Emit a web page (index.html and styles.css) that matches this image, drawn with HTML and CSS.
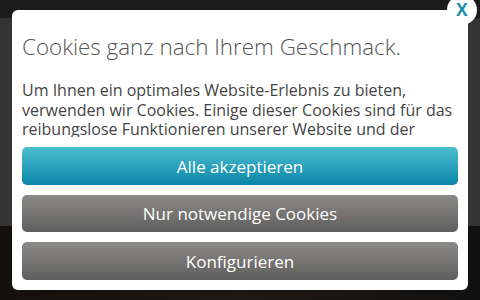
FILE: index.html
```html
<!DOCTYPE html>
<html lang="de">
<head>
    <meta charset="UTF-8">
    <title>Cookies</title>
    <link rel="stylesheet" href="styles.css">
</head>
<body>
    <div class="page">
        <div class="topbar"></div>
        <div class="band"></div>
        <div class="photo"></div>
    </div>

    <div class="overlay">
        <div class="modal">
            <button class="close" aria-label="Schließen">X</button>
            <h1>Cookies ganz nach Ihrem Geschmack.</h1>
            <div class="text">
                <p>Um Ihnen ein optimales Website-Erlebnis zu bieten, verwenden wir Cookies. Einige dieser Cookies sind für das reibungslose Funktionieren unserer Website und der Bereitstellung unserer Dienste erforderlich.</p>
            </div>
            <div class="actions">
                <button class="btn btn-primary">Alle akzeptieren</button>
                <button class="btn btn-grey btn-mid">Nur notwendige Cookies</button>
                <button class="btn btn-grey">Konfigurieren</button>
            </div>
        </div>
    </div>
</body>
</html>
```

FILE: styles.css
```css
* {
    margin: 0;
    padding: 0;
    box-sizing: border-box;
    font-family: 'Open Sans', 'Noto Sans', sans-serif;
}

body {
    background: #121010;
    width: 480px;
    height: 300px;
    overflow: hidden;
}

.page {
    display: flex;
    flex-direction: column;
    height: 300px;
}

.topbar {
    height: 18px;
    background: #1b1b1b;
}

.band {
    height: 208px;
    background: #333333;
}

.photo {
    flex: 1;
    background: linear-gradient(90deg, #15100d, #1e1712 50%, #111 100%);
}

.overlay {
    position: absolute;
    top: 0;
    left: 0;
    width: 480px;
    height: 300px;
    padding: 10px 12px;
}

.modal {
    position: relative;
    background: #fff;
    border-radius: 6px;
    height: 280px;
    padding: 22px 10px 10px;
}

.close {
    position: absolute;
    top: -15px;
    right: -9px;
    width: 30px;
    height: 30px;
    border-radius: 50%;
    border: none;
    background: #fff;
    color: #1a8fae;
    font-weight: bold;
    font-size: 17px;
    line-height: 30px;
    cursor: pointer;
}

h1 {
    font-weight: 300;
    font-size: 22.4px;
    color: #555;
    line-height: 30px;
    margin-bottom: 19px;
}

.text {
    height: 56px;
    overflow: hidden;
    font-size: 16px;
    line-height: 19.6px;
    color: #444;
}

.actions {
    display: flex;
    flex-direction: column;
    gap: 10px;
    margin-top: 10px;
}

.btn {
    height: 38px;
    border: none;
    border-radius: 5px;
    color: #fff;
    font-size: 17px;
    cursor: pointer;
}

.btn-mid {
    height: 37px;
}

.btn-primary {
    background: linear-gradient(#4cbdd0, #0a86a8);
}

.btn-grey {
    background: linear-gradient(#8d8b88, #5e5e5e);
}
```
